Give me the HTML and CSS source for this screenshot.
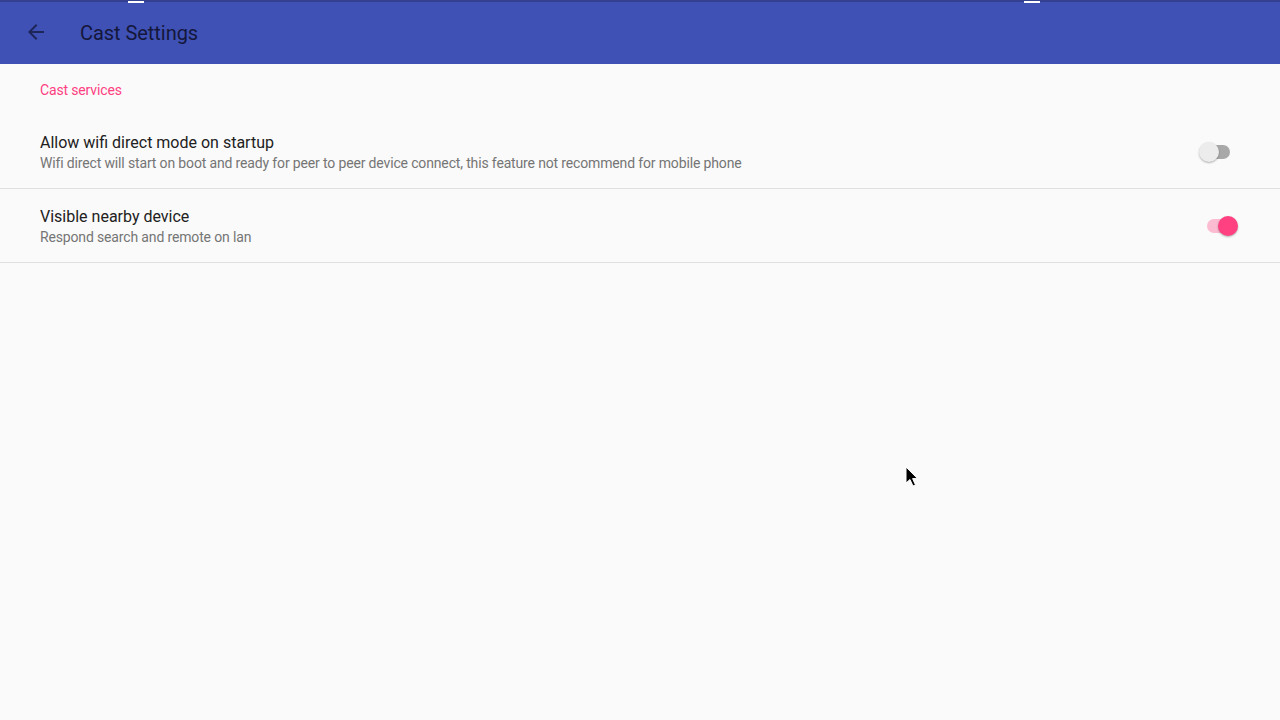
FILE: index.html
```html
<!DOCTYPE html>
<html lang="en">
<head>
    <meta charset="UTF-8">
    <meta name="viewport" content="width=device-width, initial-scale=1.0">
    <title>Cast Settings</title>
    <link rel="stylesheet" href="styles.css">
</head>
<body>
    <div class="status-marks">
        <span class="mark mark-left"></span>
        <span class="mark mark-right"></span>
    </div>

    <header class="toolbar">
        <button class="back-btn" aria-label="Back">
            <svg width="24" height="24" viewBox="0 0 24 24">
                <path d="M20 11H7.83l5.59-5.59L12 4l-8 8 8 8 1.41-1.41L7.83 13H20v-2z" fill="currentColor"/>
            </svg>
        </button>
        <h1 class="toolbar-title">Cast Settings</h1>
    </header>

    <main class="prefs">
        <div class="pref-category">Cast services</div>

        <div class="pref-row">
            <div class="pref-text">
                <div class="pref-title">Allow wifi direct mode on startup</div>
                <div class="pref-summary">Wifi direct will start on boot and ready for peer to peer device connect, this feature not recommend for mobile phone</div>
            </div>
            <div class="switch">
                <span class="track"></span>
                <span class="thumb"></span>
            </div>
        </div>

        <div class="pref-row">
            <div class="pref-text">
                <div class="pref-title">Visible nearby device</div>
                <div class="pref-summary">Respond search and remote on lan</div>
            </div>
            <div class="switch on">
                <span class="track"></span>
                <span class="thumb"></span>
            </div>
        </div>
    </main>

    <!-- mouse pointer left on screen -->
    <svg class="cursor" width="16" height="24" viewBox="0 0 16 24">
        <path d="M1 1 L1 17 L5 13.5 L8 20 L10.5 19 L7.6 12.6 L12.5 12.6 Z" fill="#000" stroke="#fff" stroke-width="1"/>
    </svg>
</body>
</html>
```

FILE: styles.css
```css
/* Page */
body {
    font-family: Roboto, "Noto Sans", Arial, sans-serif;
    background-color: #fafafa;
    margin: 0;
    padding: 0;
    width: 1280px;
    height: 720px;
    overflow: hidden;
    position: relative;
}

/* Status bar leftovers at the very top */
.status-marks {
    position: absolute;
    top: 0;
    left: 0;
    right: 0;
    height: 2px;
    background-color: #343f8f;
    z-index: 2;
}

.mark {
    position: absolute;
    top: 1px;
    width: 16px;
    height: 2px;
    background-color: #fff;
}

.mark-left { left: 128px; }
.mark-right { left: 1024px; }

/* Toolbar */
.toolbar {
    height: 64px;
    background-color: #3f51b5;
    display: flex;
    align-items: center;
    box-sizing: border-box;
}

.back-btn {
    width: 24px;
    height: 24px;
    margin-left: 24px;
    padding: 0;
    border: none;
    background: none;
    color: #1d2559;
    display: flex;
}

.toolbar-title {
    margin: 2px 0 0 32px;
    font-size: 20px;
    font-weight: 400;
    color: #14173a;
    line-height: 28px;
    letter-spacing: -0.05px;
}

/* Preference list */
.pref-category {
    padding: 16px 40px 15px;
    font-size: 14px;
    line-height: 20px;
    color: #ff4081;
    letter-spacing: -0.15px;
}

.pref-row {
    display: flex;
    align-items: center;
    padding: 17px 42px 15px 40px;
    border-bottom: 1px solid #e0e0e0;
}

.pref-text {
    flex: 1;
}

.pref-title {
    font-size: 16px;
    line-height: 21px;
    color: #212121;
}

.pref-summary {
    font-size: 14px;
    line-height: 20px;
    color: #757575;
    letter-spacing: -0.15px;
}

/* Switch */
.switch {
    position: relative;
    width: 40px;
    height: 22px;
    margin-top: -2px;
}

.switch .track {
    position: absolute;
    top: 4px;
    left: 3px;
    width: 29px;
    height: 14px;
    border-radius: 7px;
    background-color: #a8a8a8;
}

.switch .thumb {
    position: absolute;
    top: 1px;
    left: 1px;
    width: 20px;
    height: 20px;
    border-radius: 50%;
    background-color: #ececec;
    box-shadow: 0 1px 2px rgba(0, 0, 0, 0.3);
}

.switch.on .track {
    left: 9px;
    background-color: #fbbcd1;
}

.switch.on .thumb {
    left: 20px;
    background-color: #ff4081;
}

/* Pointer */
.cursor {
    position: absolute;
    left: 905px;
    top: 466px;
}
```
